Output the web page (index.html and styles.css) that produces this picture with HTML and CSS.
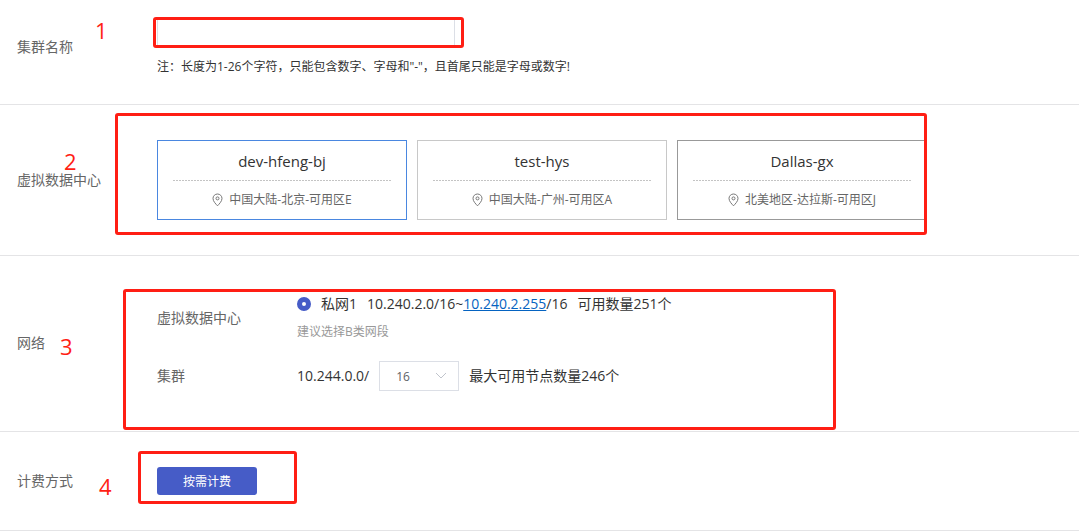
FILE: index.html
```html
<!DOCTYPE html>
<html lang="zh-CN">
<head>
<meta charset="utf-8">
<title>创建集群</title>
<link rel="stylesheet" href="styles.css">
</head>
<body>
<form class="form">
  <section class="row row-name">
    <label class="label" for="cluster-name">集群名称</label>
    <div class="content">
      <div class="field">
        <input class="input" id="cluster-name" type="text">
        <span class="frame frame-name"></span>
      </div>
      <p class="note">注：长度为1-26个字符，只能包含数字、字母和"-"，且首尾只能是字母或数字!</p>
    </div>
    <span class="step step-1">1</span>
  </section>

  <section class="row row-vdc">
    <span class="label">虚拟数据中心</span>
    <div class="content vdc">
      <div class="cards">
        <button class="card card-selected" type="button">
          <span class="card-title">dev-hfeng-bj</span>
          <span class="card-place"><svg class="pin" viewBox="0 0 11 14"><path d="M5.5 1C3 1 1 3 1 5.4 1 8.300 3.800 11 5.500 12.800 7.200 11 10 8.300 10 5.400 10 3 8 1 5.500 1Z"/><circle cx="5.500" cy="5.400" r="1.500"/></svg>中国大陆-北京-可用区E</span>
        </button>
        <button class="card" type="button">
          <span class="card-title">test-hys</span>
          <span class="card-place"><svg class="pin" viewBox="0 0 11 14"><path d="M5.5 1C3 1 1 3 1 5.4 1 8.300 3.800 11 5.500 12.800 7.200 11 10 8.300 10 5.400 10 3 8 1 5.500 1Z"/><circle cx="5.500" cy="5.400" r="1.500"/></svg>中国大陆-广州-可用区A</span>
        </button>
        <button class="card card-hover" type="button">
          <span class="card-title">Dallas-gx</span>
          <span class="card-place"><svg class="pin" viewBox="0 0 11 14"><path d="M5.5 1C3 1 1 3 1 5.4 1 8.300 3.800 11 5.500 12.800 7.200 11 10 8.300 10 5.400 10 3 8 1 5.500 1Z"/><circle cx="5.500" cy="5.400" r="1.500"/></svg>北美地区-达拉斯-可用区J</span>
        </button>
      </div>
      <span class="frame frame-vdc"></span>
    </div>
    <span class="step step-2">2</span>
  </section>

  <section class="row row-network">
    <span class="label">网络</span>
    <div class="content network">
      <div class="item">
        <span class="item-label">虚拟数据中心</span>
        <div class="item-body">
          <div class="line">
            <input class="radio" id="net-1" type="radio" name="net" checked>
            <label class="line" for="net-1"><span>私网1</span><span>10.240.2.0/16~<a class="link" href="#net-1">10.240.2.255</a>/16</span><span>可用数量251个</span></label>
          </div>
          <p class="hint">建议选择B类网段</p>
        </div>
      </div>
      <div class="item">
        <label class="item-label" for="mask">集群</label>
        <div class="line">
          <span>10.244.0.0/</span>
          <span class="select-box">
            <select class="select" id="mask"><option>16</option></select>
            <svg class="chevron" viewBox="0 0 12 7"><path d="M1 1L6 6L11 1"/></svg>
          </span>
          <span>最大可用节点数量246个</span>
        </div>
      </div>
      <span class="frame frame-network"></span>
    </div>
    <span class="step step-3">3</span>
  </section>

  <section class="row row-billing">
    <span class="label">计费方式</span>
    <div class="content billing">
      <button class="button" type="button">按需计费</button>
      <span class="frame frame-billing"></span>
    </div>
    <span class="step step-4">4</span>
  </section>
</form>
</body>
</html>
```
FILE: styles.css
```css
* {
  box-sizing: border-box;
}

body {
  margin: 0;
  background: #fff;
  color: #333;
  font: 14px/20px "Open Sans", "Noto Sans CJK SC", sans-serif;
}

button,
input,
select {
  margin: 0;
  font-family: inherit;
}

p {
  margin: 0;
}

.row {
  position: relative;
  display: grid;
  grid-template-columns: 140px 1fr;
  align-items: center;
  padding-left: 17px;
  border-bottom: 1px solid #e4e4e6;
}

.label,
.item-label {
  color: #666;
}

.row-name {
  padding-top: 17px;
  padding-bottom: 28px;
}

.row-vdc {
  padding-top: 35px;
  padding-bottom: 35px;
}

.row-network {
  padding-top: 38px;
  padding-bottom: 40px;
}

.row-billing {
  padding-top: 35px;
  padding-bottom: 35px;
}

.field {
  position: relative;
  width: 298px;
}

.input {
  display: block;
  width: 100%;
  height: 30px;
  padding: 0 10px;
  border: 1px solid #dcdfe6;
  background: #fff;
  font-size: 14px;
}

.note {
  padding-top: 10px;
  font-size: 12px;
  line-height: 19px;
}

.vdc {
  position: relative;
  max-width: 768px;
}

.cards {
  display: flex;
  gap: 10px;
  overflow: hidden;
}

.card {
  flex: 0 0 250px;
  height: 80px;
  padding: 0 15px;
  border: 1px solid #c8c8c8;
  background: #fff;
  text-align: center;
}

.card-selected {
  border-color: #4a87e0;
}

.card-hover {
  border-color: #999;
}

.card-title {
  display: block;
  padding-bottom: 9px;
  background: repeating-linear-gradient(90deg, #c4c4c4 0 2px, transparent 2px 3px) bottom / 100% 1px no-repeat;
  color: #333;
  font-size: 15px;
  line-height: 22px;
}

.card-place {
  display: flex;
  align-items: center;
  justify-content: center;
  gap: 6px;
  padding-top: 9px;
  color: #666;
  font-size: 12px;
  line-height: 20px;
}

.pin {
  width: 11px;
  height: 14px;
  fill: none;
  stroke: #777;
}

.network {
  position: relative;
  display: grid;
  gap: 19px;
  max-width: 676px;
}

.item {
  display: grid;
  grid-template-columns: 140px 1fr;
  align-items: center;
}

.line {
  display: flex;
  align-items: center;
  gap: 10px;
  white-space: nowrap;
}

.radio {
  width: 14px;
  height: 14px;
  border: 5px solid #465cc7;
  border-radius: 50%;
  background: #fff;
  appearance: none;
}

.link {
  color: #0563c1;
}

.hint {
  padding-top: 8px;
  color: #999;
  font-size: 12px;
}

.select-box {
  position: relative;
  width: 80px;
}

.select {
  display: block;
  width: 100%;
  height: 30px;
  padding: 0 16px;
  border: 1px solid #dcdfe6;
  background: #fff;
  color: #606266;
  font-size: 12px;
  appearance: none;
}

.chevron {
  position: absolute;
  top: 11px;
  right: 12px;
  width: 12px;
  height: 7px;
  fill: none;
  stroke: #c0c4cc;
  pointer-events: none;
}

.billing {
  position: relative;
}

.button {
  display: block;
  width: 100px;
  height: 28px;
  padding: 0;
  border: 0;
  border-radius: 3px;
  background: #465cc7;
  color: #fff;
  font-size: 12px;
}

/* Red call-outs drawn over the form */
.frame {
  position: absolute;
  border: 3px solid #ff1e14;
  border-radius: 3px;
  pointer-events: none;
}

.frame-name {
  inset: 0 -9px -1px -4px;
}

.frame-vdc {
  inset: -27px -2px -15px -42px;
}

.frame-network {
  inset: -5px -3px -39px -34px;
}

.frame-billing {
  top: -16px;
  bottom: -9px;
  left: -19px;
  width: 159px;
}

.step {
  position: absolute;
  color: #ff1e14;
  font-size: 22px;
  line-height: 20px;
}

.step-1 {
  top: 20px;
  left: 95px;
}

.step-2 {
  top: 46px;
  left: 64px;
}

.step-3 {
  top: 80px;
  left: 60px;
}

.step-4 {
  top: 44px;
  left: 99px;
}
```
